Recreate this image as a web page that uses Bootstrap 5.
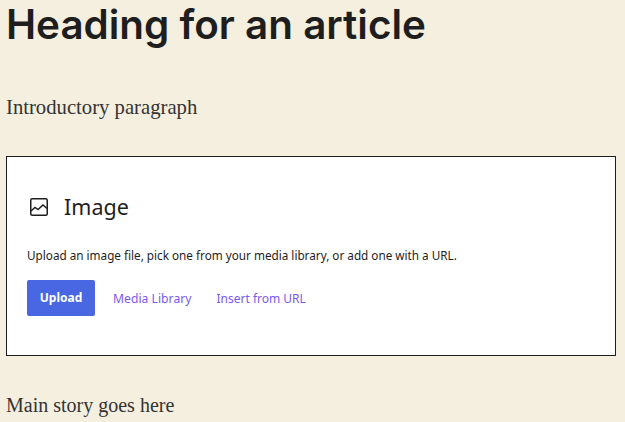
<!DOCTYPE html>
<html lang="en"><head><meta charset="utf-8">
<link href="https://cdn.jsdelivr.net/npm/bootstrap@5.3.0/dist/css/bootstrap.min.css" rel="stylesheet">
<style>
html,body{height:100%;overflow:hidden}
body{background:#f5efe0;color:#1e1e1e;padding:0 9px 0 6px}
.art-title{font-family:Inter,sans-serif;font-weight:600;font-size:40.4px;line-height:50px;margin:0;color:#1e1e1e}
.art-text{font-family:"Liberation Serif",serif;font-size:20.7px;line-height:30px;margin:0;color:#333}
.intro{margin-top:42px;margin-bottom:34px}
.ph{border:1px solid #1e1e1e;background:#fff;padding:33px 20px 0 20px;height:200px;color:#1e1e1e;font-family:"Noto Sans",sans-serif}
.ph-label{font-size:21.5px;line-height:34px;gap:13px}
.ph-ins{font-size:11.73px;line-height:18px;margin:22px 0 16px}
.ph-btn{font-family:"Noto Sans",sans-serif;font-size:12px;font-weight:700;background:#4a67e3;border:0;border-radius:2px;height:36px;width:68px;padding:0;color:#fff;margin-right:-7px}
.ph-lnk{font-size:12.2px;color:#7a5af0;text-decoration:none;padding-top:2px}
.ph-lnk-url{font-size:12px}
.btn-row{gap:25px}
.tail{margin-top:34px;font-size:20px}
</style></head><body>
<h1 class="art-title">Heading for an article</h1>
<p class="art-text intro">Introductory paragraph</p>
<div class="ph">
<div class="ph-label d-flex align-items-center"><svg width="24" height="24" viewBox="0 0 24 24" fill="none" stroke="#1e1e1e" stroke-width="1.5"><rect x="3.75" y="3.75" width="16.5" height="16.5" rx="1.5"/><path d="M4 16l4-3.5 3 2 5-4.5 4 3.5"/></svg><span>Image</span></div>
<p class="ph-ins">Upload an image file, pick one from your media library, or add one with a URL.</p>
<div class="d-flex align-items-center btn-row"><button class="btn ph-btn" type="button">Upload</button><a class="ph-lnk" href="#">Media Library</a><a class="ph-lnk ph-lnk-url" href="#">Insert from URL</a></div>
</div>
<p class="art-text tail">Main story goes here</p>
</body></html>
